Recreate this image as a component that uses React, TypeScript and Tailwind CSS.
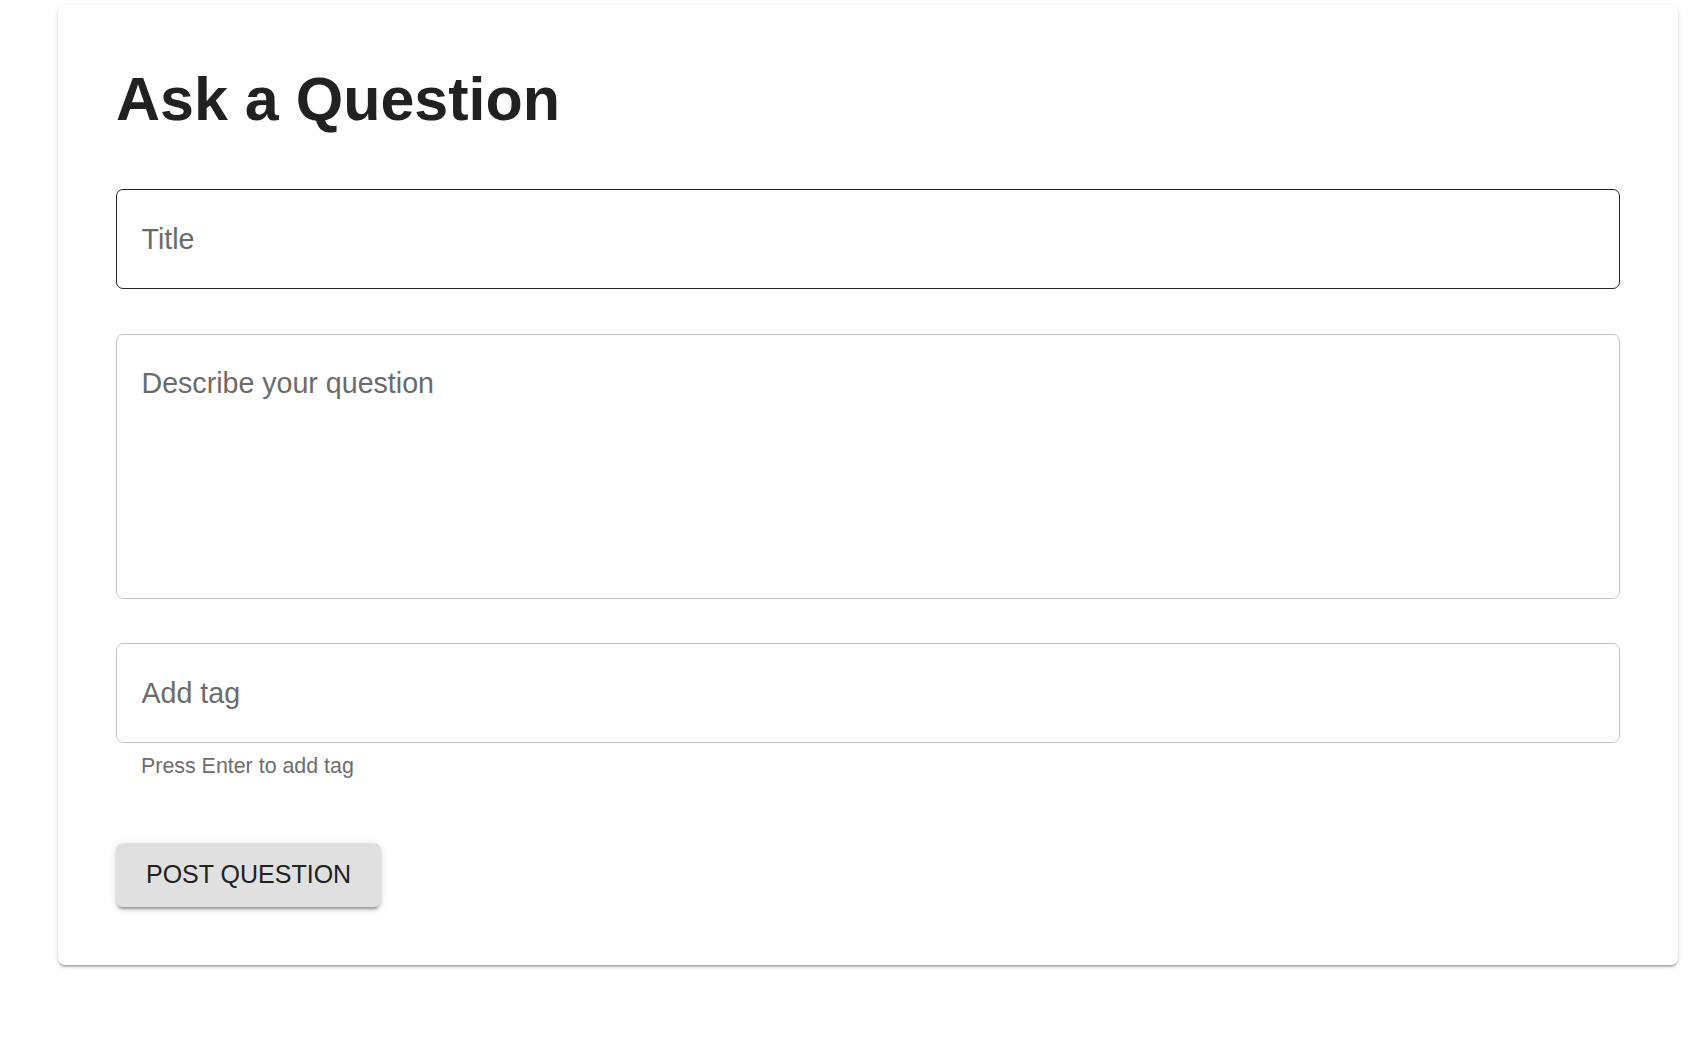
export default function App() {
  return (
    <div className="min-h-[1046px] bg-white pt-[5px] font-['Liberation_Sans',Arial,sans-serif]">
      <section className="ml-[58px] w-[1620px] rounded-[7px] bg-white px-[58px] pt-[58px] pb-[58px] shadow-[0px_3px_2px_-2px_rgba(0,0,0,0.2),0px_2px_2px_0px_rgba(0,0,0,0.14),0px_2px_5px_0px_rgba(0,0,0,0.12)]">
        <h1 className="mb-[53px] text-[61px] font-bold leading-[73px] text-[#212121]">Ask a Question</h1>

        <input
          type="text"
          placeholder="Title"
          className="block h-[100px] w-full rounded-[7px] border-[1.75px] border-[#212121] px-[24.5px] text-[28.6px] text-[#212121] outline-none placeholder:text-[#6b6b6b]"
        />

        <textarea
          placeholder="Describe your question"
          className="mt-[45px] block h-[265px] w-full resize-none rounded-[7px] border-[1.75px] border-[#c4c4c4] px-[24.5px] pt-[32px] text-[28.6px] leading-[33px] text-[#212121] outline-none placeholder:text-[#6b6b6b]"
        />

        <input
          type="text"
          placeholder="Add tag"
          className="mt-[44px] block h-[100px] w-full rounded-[7px] border-[1.75px] border-[#c4c4c4] px-[24.5px] text-[28.6px] text-[#212121] outline-none placeholder:text-[#6b6b6b]"
        />
        <p className="mt-[6px] px-[25px] text-[21.4px] leading-[35px] text-[#6d6d6d]">Press Enter to add tag</p>

        <button className="mt-[59px] h-[64px] rounded-[7px] bg-[#e0e0e0] px-[30px] text-[25px] font-medium uppercase text-[#212121] shadow-[0px_5px_2px_-3px_rgba(0,0,0,0.2),0px_3px_3px_0px_rgba(0,0,0,0.14),0px_2px_9px_0px_rgba(0,0,0,0.12)]">
          Post Question
        </button>
      </section>
    </div>
  );
}
